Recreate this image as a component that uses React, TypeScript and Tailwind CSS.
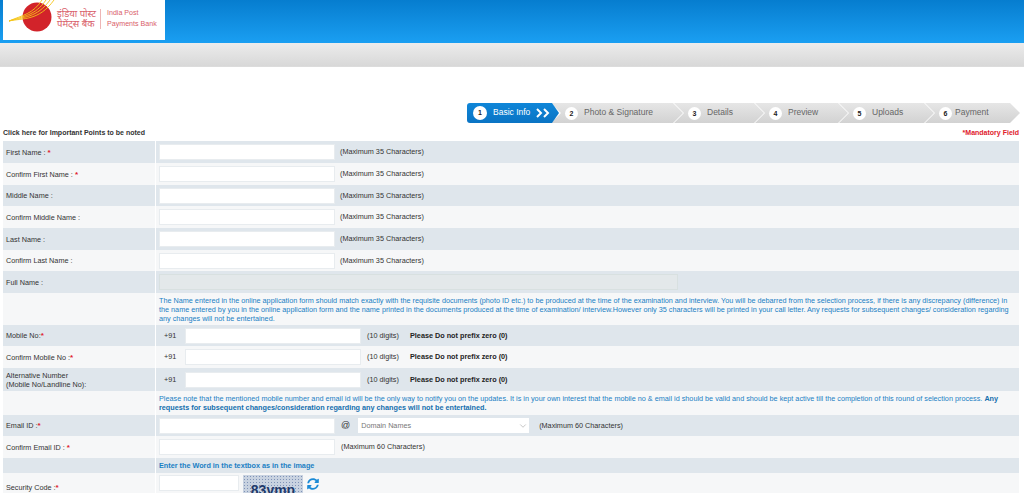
import { ChevronDown } from "lucide-react";
import { FaSyncAlt } from "react-icons/fa";

const textBase = "text-[7.25px] leading-[9px] text-[#333]";

function Star() {
  return <span className="text-[#e0202c] font-bold text-[8px]">*</span>;
}

function Box({ w = "w-[176px]" }: { w?: string }) {
  return <input className={`${w} h-[16px] bg-white border border-[#e8ecef] outline-none`} />;
}

function Row({
  label,
  star,
  shade,
  h,
  children,
}: {
  label?: React.ReactNode;
  star?: boolean;
  shade: boolean;
  h: string;
  children?: React.ReactNode;
}) {
  const bg = shade ? "bg-[#dfe6ec]" : "bg-[#f6f7f8]";
  return (
    <div className={`grid grid-cols-[152px_1fr] gap-x-px ${h}`}>
      <div className={`${bg} pl-[3px] flex items-center ${textBase}`}>
        <div>
          {label}
          {star && <Star />}
        </div>
      </div>
      <div className={`${bg} pl-[3px] flex items-center ${textBase}`}>{children}</div>
    </div>
  );
}

function NameRow({ label, star, shade, h }: { label: string; star?: boolean; shade: boolean; h: string }) {
  return (
    <Row label={label} star={star} shade={shade} h={h}>
      <Box />
      <span className="ml-[5px] mb-[1px]">(Maximum 35 Characters)</span>
    </Row>
  );
}

function MobileRow({ label, star, shade, h }: { label: React.ReactNode; star?: boolean; shade: boolean; h: string }) {
  return (
    <Row label={label} star={star} shade={shade} h={h}>
      <span className="w-[26px] pl-[5px] mb-[1px]">+91</span>
      <Box />
      <span className="ml-[6px] w-[43px] mb-[1px]">(10 digits)</span>
      <b className="text-[#222] mb-[1px]">Please Do not prefix zero (0)</b>
    </Row>
  );
}

const steps = [
  { n: 2, label: "Photo & Signature", w: "w-[132px]", gap: "ml-[6px]" },
  { n: 3, label: "Details", w: "w-[90px]", gap: "ml-[6px]" },
  { n: 4, label: "Preview", w: "w-[93px]", gap: "ml-[6px]" },
  { n: 5, label: "Uploads", w: "w-[95px]", gap: "ml-[6px]" },
  { n: 6, label: "Payment", w: "w-[95px]", gap: "ml-[3px]" },
];

function Stepper() {
  return (
    <div className="flex h-[20px] pl-[467px] text-[8.5px] leading-[10px]">
      <div className="relative z-10 w-[92px] -mr-[8px] flex items-center pl-[6px] rounded-l-[3px] text-white bg-gradient-to-b from-[#0f86d8] to-[#0a74c4] [clip-path:polygon(0_0,calc(100%-7px)_0,100%_50%,calc(100%-7px)_100%,0_100%)]">
        <span className="w-[14px] h-[14px] rounded-full bg-white text-[#222] font-bold text-[7px] leading-[14px] text-center">1</span>
        <span className="ml-[6px] mb-[2px]">Basic Info</span>
        <svg width="14" height="10" viewBox="0 0 14 10" className="ml-[6px]" fill="none" stroke="#fff" strokeWidth="2">
          <path d="M1 1l4 4-4 4M8 1l4 4-4 4" />
        </svg>
      </div>
      {steps.map((s) => (
        <div
          key={s.n}
          className={`${s.w} -mr-[9px] flex items-center pl-[14px] text-[#666] bg-gradient-to-b from-[#e6e6e6] to-[#d2d2d2] [clip-path:polygon(0_0,calc(100%-10px)_0,100%_50%,calc(100%-10px)_100%,0_100%,10px_50%)]`}
        >
          <span className="w-[13px] h-[13px] rounded-full bg-white text-[#222] font-bold text-[7px] leading-[13px] text-center">{s.n}</span>
          <span className={`${s.gap} mb-[2px] whitespace-nowrap`}>{s.label}</span>
        </div>
      ))}
    </div>
  );
}

function Logo() {
  return (
    <div className="ml-[3px] w-[162px] h-[40px] bg-white flex items-center pl-[6px] overflow-hidden">
      <svg width="46" height="40" viewBox="0 0 46 40" className="shrink-0">
        <circle cx="28" cy="17" r="14.5" fill="#d2232a" />
        <g fill="none" stroke="#f5c518" strokeWidth="0.9">
          <path d="M0 21 C14 15 24 14 33 0" />
          <path d="M0 21 C14 16 26 16 37 0" />
          <path d="M0 21 C14 17 28 18 41 0" />
          <path d="M0 21 C14 18 30 21 45 0" />
        </g>
      </svg>
      <div className="ml-[2px] mb-[3px] text-[9.5px] leading-[10px] text-[#d9606a] whitespace-nowrap font-['Noto_Sans',sans-serif]">
        <div>इंडिया पोस्ट</div>
        <div>पेमेंट्स बैंक</div>
      </div>
      <div className="ml-[4px] mr-[6px] mb-[3px] w-px h-[20px] bg-[#eeb5b5]" />
      <div className="mb-[3px] text-[7.1px] leading-[10.5px] text-[#d9606a] whitespace-nowrap">
        <div>India Post</div>
        <div>Payments Bank</div>
      </div>
    </div>
  );
}

export default function App() {
  return (
    <div className="h-[493px] overflow-hidden bg-white font-['Liberation_Sans',Arial,sans-serif]">
      <div className="h-[43px] bg-gradient-to-b from-[#067dcf] to-[#1a9ff2]">
        <Logo />
      </div>
      <div className="h-[24px] bg-gradient-to-b from-[#ececec] to-[#d8d8d8] border-b border-[#dcdcdc]" />
      <div className="h-[36px]" />
      <Stepper />
      <div className="pl-[3px] pr-[5px]">
        <div className="flex items-center justify-between h-[18px] pt-[3px]">
          <b className="text-[7px] text-[#333]">Click here for Important Points to be noted</b>
          <b className="text-[7px] text-[#e0202c]">*Mandatory Field</b>
        </div>
        <NameRow label="First Name : " star shade h="h-[22px]" />
        <NameRow label="Confirm First Name : " star shade={false} h="h-[22px]" />
        <NameRow label="Middle Name :" shade h="h-[21px]" />
        <NameRow label="Confirm Middle Name :" shade={false} h="h-[22px]" />
        <NameRow label="Last Name :" shade h="h-[22px]" />
        <NameRow label="Confirm Last Name :" shade={false} h="h-[21px]" />
        <Row label="Full Name :" shade h="h-[22px]">
          <div className="w-[519px] h-[16px] bg-[#e3e8ea] border border-[#d8e0e0]" />
        </Row>
        <Row shade={false} h="h-[32px]">
          <p className="text-[#1a7fc4] pr-[8px]">
            The Name entered in the online application form should match exactly with the requisite documents (photo ID etc.) to be produced at the time of the examination and interview. You will be debarred from the selection process, if there is any discrepancy (difference) in the name entered by you in the online application form and the name printed in the documents produced at the time of examination/ interview.However only 35 characters will be printed in your call letter. Any requests for subsequent changes/ consideration regarding any changes will not be entertained.
          </p>
        </Row>
        <MobileRow label="Mobile No:" star shade h="h-[21px]" />
        <MobileRow label="Confirm Mobile No :" star shade={false} h="h-[22px]" />
        <MobileRow
          label={
            <>
              Alternative Number
              <br />
              (Mobile No/Landline No):
            </>
          }
          shade
          h="h-[23px]"
        />
        <Row shade={false} h="h-[24px]">
          <p className="text-[#1a7fc4] pr-[12px]">
            Please note that the mentioned mobile number and email id will be the only way to notify you on the updates. It is in your own interest that the mobile no &amp; email id should be valid and should be kept active till the completion of this round of selection process.{" "}
            <b className="text-[#146fae]">Any requests for subsequent changes/consideration regarding any changes will not be entertained.</b>
          </p>
        </Row>
        <Row label="Email ID :" star shade h="h-[21px]">
          <Box />
          <span className="ml-[6px] text-[9px]">@</span>
          <div className="ml-[8px] w-[171px] h-[15px] bg-white flex items-center justify-between pl-[3px] pr-[1px] text-[#777]">
            Domain Names
            <ChevronDown size={10} strokeWidth={1} />
          </div>
          <span className="ml-[10px] mb-[1px]">(Maximum 60 Characters)</span>
        </Row>
        <Row label="Confirm Email ID : " star shade={false} h="h-[22px]">
          <Box />
          <span className="ml-[6px] mb-[1px]">(Maximum 60 Characters)</span>
        </Row>
        <Row shade h="h-[15px]">
          <b className="text-[#1a7fc4]">Enter the Word in the textbox as in the image</b>
        </Row>
        <div className="grid grid-cols-[152px_1fr] gap-x-px h-[30px]">
          <div className={`bg-[#f6f7f8] pl-[3px] pt-[10px] ${textBase}`}>
            Security Code :<Star />
          </div>
          <div className="bg-[#f6f7f8] pl-[3px] pt-[2px] flex items-start">
            <input className="w-[80px] h-[16px] bg-white border border-[#e8ecef] outline-none" />
            <div className="ml-[4px] w-[60px] h-[28px] overflow-hidden bg-[#c8d2e0] bg-[radial-gradient(#7f93b8_0.7px,transparent_0.9px)] bg-[length:3px_3px] text-center text-[#1f3a6b] font-bold text-[14px] leading-[30px]">
              83vmp
            </div>
            <FaSyncAlt className="ml-[4px] mt-[3px] text-[#1a8ad6]" size={12} />
          </div>
        </div>
      </div>
    </div>
  );
}
